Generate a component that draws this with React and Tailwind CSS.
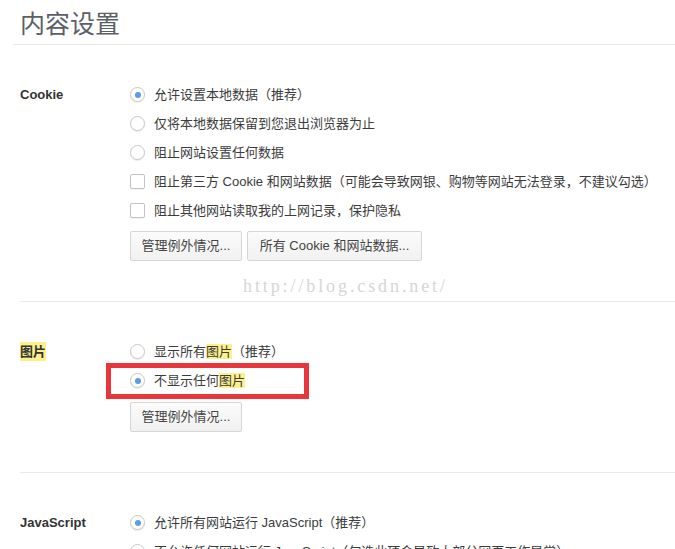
import React from "react";

const font = { fontFamily: '"Liberation Sans", "Noto Sans CJK SC", sans-serif' };

function Radio({ checked }) {
  return (
    <span className="w-[15px] h-[15px] rounded-full border border-[#c9c9c9] bg-white shadow-[0_1px_1px_rgba(0,0,0,0.08)] flex items-center justify-center shrink-0">
      {checked && <span className="w-[6px] h-[6px] rounded-full bg-[#5c9be6]" />}
    </span>
  );
}

function Check() {
  return (
    <span className="w-[15px] h-[15px] rounded-[2px] border border-[#c4c4c4] bg-white shadow-[0_1px_1px_rgba(0,0,0,0.06)] shrink-0" />
  );
}

function Row({ type, checked, children, extra }) {
  return (
    <div className="relative h-[29px] flex items-center gap-[9px] text-[13px] text-[#3c3c3c]">
      {type === "radio" ? <Radio checked={checked} /> : <Check />}
      <span className="relative z-10 whitespace-nowrap">{children}</span>
      {extra}
    </div>
  );
}

function Btn({ children, w }) {
  return (
    <button className={`h-[30px] ${w} rounded-[2px] border border-[#d6d6d6] bg-gradient-to-b from-[#fbfbfb] to-[#f1f1f1] text-[13px] text-[#444] flex items-center justify-center`}>
      {children}
    </button>
  );
}

const Hl = ({ children }) => <span className="bg-[#fdf08a]">{children}</span>;

function Section({ label, children, border = true }) {
  return (
    <div className={`flex pt-[35px] pb-[40px] ${border ? "border-b border-[#ebebeb]" : ""}`}>
      <div className="w-[110px] shrink-0 h-[29px] flex items-center text-[13px] font-bold text-[#333]">
        {label}
      </div>
      <div className="flex-1">{children}</div>
    </div>
  );
}

export default function App() {
  return (
    <div style={font} className="relative w-[675px] h-[549px] overflow-hidden bg-white">
      <div className="ml-[13px] h-[45px] border-b border-[#e6e6e6]">
        <div className="pl-[7px] pt-[9px] text-[25px] leading-[30px] text-[#5b5f68]">内容设置</div>
      </div>
      <div className="ml-[20px]">
        <Section label="Cookie">
          <Row type="radio" checked>允许设置本地数据（推荐）</Row>
          <Row type="radio">仅将本地数据保留到您退出浏览器为止</Row>
          <Row type="radio">阻止网站设置任何数据</Row>
          <Row type="check">阻止第三方 Cookie 和网站数据（可能会导致网银、购物等网站无法登录，不建议勾选）</Row>
          <Row type="check">阻止其他网站读取我的上网记录，保护隐私</Row>
          <div className="mt-[6px] flex gap-[5px]">
            <Btn w="w-[112px]">管理例外情况...</Btn>
            <Btn w="w-[175px]">所有 Cookie 和网站数据...</Btn>
          </div>
        </Section>
        <Section label={<Hl>图片</Hl>}>
          <Row type="radio">显示所有<Hl>图片</Hl>（推荐）</Row>
          <Row
            type="radio"
            checked
            extra={<span className="absolute left-[-24px] top-[-3px] w-[203px] h-[36px] border-[5px] border-[#e8363b]" />}
          >
            不显示任何<Hl>图片</Hl>
          </Row>
          <div className="mt-[7px] flex">
            <Btn w="w-[112px]">管理例外情况...</Btn>
          </div>
        </Section>
        <Section label="JavaScript" border={false}>
          <Row type="radio" checked>允许所有网站运行 JavaScript（推荐）</Row>
          <Row type="radio">不允许任何网站运行 JavaScript（勾选此项会导致大部分网页工作异常）</Row>
        </Section>
      </div>
      <div
        className="absolute left-[243px] top-[273px] text-[18px] text-[#d6d6d6] tracking-[2.9px]"
        style={{ fontFamily: '"Liberation Serif", serif' }}
      >
        http://blog.csdn.net/
      </div>
    </div>
  );
}
